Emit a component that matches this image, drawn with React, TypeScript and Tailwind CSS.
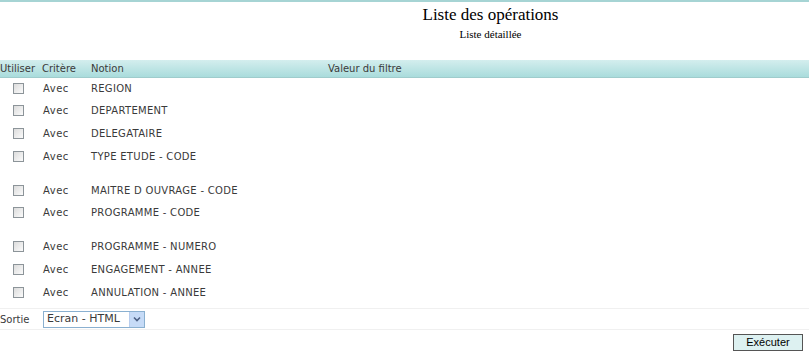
const rows: (string | null)[] = [
  'REGION',
  'DEPARTEMENT',
  'DELEGATAIRE',
  'TYPE ETUDE - CODE',
  null,
  'MAITRE D OUVRAGE - CODE',
  'PROGRAMME - CODE',
  null,
  'PROGRAMME - NUMERO',
  'ENGAGEMENT - ANNEE',
  'ANNULATION - ANNEE',
]

const Box = () => (
  <span className="block w-[11px] h-[11px] border border-[#8c9499] bg-gradient-to-br from-[#dcdcdc] to-[#fbfbfb]" />
)

export default function App() {
  return (
    <div className="w-[809px] h-[353px] bg-white text-[#3a3a3a] font-['DejaVu_Sans',Verdana,sans-serif] text-[10px] overflow-hidden">
      <div className="h-[2px] bg-[#a6d4d4]" />

      {/* Titles */}
      <div className="pl-[172px] pt-[3px] text-center font-['Liberation_Serif',serif] text-black">
        <div className="text-[17px] leading-[20px]">Liste des opérations</div>
        <div className="text-[11px] leading-[16px] mt-[1px]">Liste détaillée</div>
      </div>

      {/* Header band */}
      <div className="mt-[18px] h-[18px] flex items-center bg-gradient-to-b from-[#d4eeee] to-[#a9dcdc] border-b border-[#9fcccc]">
        <span className="w-[42px]">Utiliser</span>
        <span className="w-[49px]">Critère</span>
        <span className="w-[237px]">Notion</span>
        <span>Valeur du filtre</span>
      </div>

      {/* Criteria rows */}
      <div className="-mt-[1px]">
        {rows.map((r, i) =>
          r === null ? (
            <div key={i} className="h-[11.5px]" />
          ) : (
            <div key={i} className="h-[22.6px] flex items-center">
              <span className="w-[43px] pl-[13px]">
                <Box />
              </span>
              <span className="w-[48px] tracking-[0.5px]">Avec</span>
              <span className="tracking-[0.3px]">{r}</span>
            </div>
          ),
        )}
      </div>

      {/* Output */}
      <div className="mt-[5px] h-[22px] flex items-center border-t border-b border-[#f0f0f0]">
        <span className="w-[43px]">Sortie</span>
        <div className="w-[102px] h-[17px] flex items-center border border-[#8ab0d0] bg-white">
          <span className="flex-1 pl-[3px] text-[11px]">Ecran - HTML</span>
          <span className="w-[15px] h-[15px] flex items-center justify-center bg-[#c6dbf7] border-l border-[#b7cdee]">
            <svg width="8" height="6" viewBox="0 0 8 6">
              <path d="M1 1.5 L4 4.5 L7 1.5" fill="none" stroke="#4d6185" strokeWidth="1.6" />
            </svg>
          </span>
        </div>
      </div>

      <div className="flex justify-end pr-[6px] pt-[4px]">
        <button className="w-[70px] h-[17px] bg-[#ddf1f1] border border-[#555] font-['Liberation_Sans',Arial,sans-serif] text-[11px] text-black leading-none">
          Exécuter
        </button>
      </div>
    </div>
  )
}
